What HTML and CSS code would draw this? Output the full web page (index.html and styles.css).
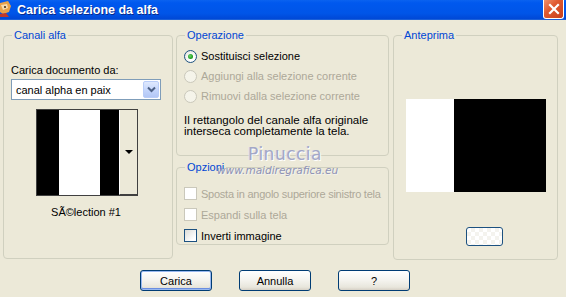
FILE: index.html
```html
<html>
  <head>
    <title>Carica selezione da alfa</title>
    <meta name="viewport" content="width=device-width, initial-scale=1">
    <link rel="stylesheet" href="styles.css">
  </head>
  <body>
    <div class="window">
      <div class="titlebar">
        <svg class="app-icon" width="14" height="18" viewBox="0 0 14 18">
          <path d="M0 3 L8 1 L11 6 L9 12 L3 14 L0 12 Z" fill="#e8a24a"/>
          <path d="M1 5 L7 4 L8 8 L3 10 Z" fill="#f6dcae"/>
          <circle cx="5" cy="7" r="1" fill="#3a2410"/>
          <path d="M0 14 L6 13 L9 17 L0 17 Z" fill="#c0392b"/>
        </svg>
        <span class="title">Carica selezione da alfa</span>
        <span class="close">
          <svg width="12" height="12" viewBox="0 0 12 12">
            <path d="M2 2 L10 10 M10 2 L2 10" stroke="#fff" stroke-width="2.2" stroke-linecap="square"/>
          </svg>
        </span>
      </div>

      <div class="panels">
        <fieldset class="group channels">
          <legend>Canali alfa</legend>
          <div class="field-label">Carica documento da:</div>
          <div class="select">
            <span class="select-value">canal alpha en paix</span>
            <span class="select-btn">
              <svg width="9" height="7" viewBox="0 0 9 7">
                <path d="M1 1.5 L4.5 5 L8 1.5" fill="none" stroke="#4d6185" stroke-width="2"/>
              </svg>
            </span>
          </div>
          <div class="thumb">
            <div class="thumb-img">
              <span class="band black" style="width: 22px"></span>
              <span class="band white" style="width: 41px"></span>
              <span class="band black" style="width: 19px"></span>
            </div>
            <div class="thumb-scroll">
              <span class="arrow"></span>
            </div>
          </div>
          <div class="caption">SÃ©lection #1</div>
        </fieldset>

        <div class="middle">
          <fieldset class="group operation">
            <legend>Operazione</legend>
            <div class="option">
              <span class="radio checked"></span>
              <span>Sostituisci selezione</span>
            </div>
            <div class="option disabled">
              <span class="radio"></span>
              <span>Aggiungi alla selezione corrente</span>
            </div>
            <div class="option disabled">
              <span class="radio"></span>
              <span>Rimuovi dalla selezione corrente</span>
            </div>
            <p class="note">Il rettangolo del canale alfa originale<br>interseca completamente la tela.</p>
          </fieldset>

          <fieldset class="group options">
            <legend>Opzioni</legend>
            <div class="option disabled tight">
              <span class="check"></span>
              <span>Sposta in angolo superiore sinistro tela</span>
            </div>
            <div class="option disabled">
              <span class="check"></span>
              <span>Espandi sulla tela</span>
            </div>
            <div class="option">
              <span class="check"></span>
              <span>Inverti immagine</span>
            </div>
          </fieldset>

          <div class="watermark">
            <div class="wm-name">Pinuccia</div>
            <div class="wm-url">www.maidiregrafica.eu</div>
          </div>
        </div>

        <fieldset class="group preview">
          <legend>Anteprima</legend>
          <div class="preview-img">
            <span class="band white" style="width: 48px"></span>
            <span class="band black" style="width: 92px"></span>
          </div>
          <span class="preview-btn"></span>
        </fieldset>
      </div>

      <div class="actions">
        <button class="btn default">Carica</button>
        <button class="btn">Annulla</button>
        <button class="btn">?</button>
      </div>
    </div>
  </body>
</html>
```

FILE: styles.css
```css
body {
  background: #ece9d8;
  color: #000000;
  font-family: "Liberation Sans", Arial, sans-serif;
  font-size: 11px;
  margin: 0;
}

.window {
  height: 297px;
  width: 566px;
}

.titlebar {
  align-items: center;
  background: linear-gradient(180deg, #0a62f0 0%, #0058ee 15%, #0055e8 70%, #0048d6 100%);
  border-bottom: 1px solid #1a5fd8;
  display: flex;
  height: 19px;
}

.app-icon {
  margin-left: 0;
  margin-top: -2px;
}

.title {
  color: #ffffff;
  font-family: "Liberation Sans", Arial, sans-serif;
  font-size: 12.5px;
  font-weight: bold;
  margin-left: 3px;
  text-shadow: 1px 1px 0 #0a2a8c;
}

.close {
  align-items: center;
  background: linear-gradient(135deg, #f0906c 0%, #e05a30 40%, #c8401c 100%);
  border: 1px solid #ffffff;
  border-radius: 0 0 3px 3px;
  border-top: 0;
  display: flex;
  height: 18px;
  justify-content: center;
  margin-left: auto;
  margin-right: 2px;
  margin-top: -1px;
  width: 19px;
}

.panels {
  display: grid;
  gap: 0 4px;
  grid-template-columns: 170px 212px 165px;
  padding: 8px 0 0 3px;
}

.panels .middle {
  margin-left: -1px;
}

.group {
  border: 1px solid #d0d0bf;
  border-radius: 4px;
  margin: 0;
  min-width: 0;
  padding: 0 7px;
}

.group legend {
  color: #0046d5;
  line-height: 14px;
  margin-left: 1px;
  padding: 0 2px;
}

.channels {
  height: 229px;
}

.field-label {
  line-height: 14px;
  margin-top: 21px;
}

.select {
  align-items: center;
  background: #ffffff;
  border: 1px solid #7f9db9;
  box-sizing: border-box;
  display: flex;
  height: 21px;
  margin-top: 2px;
  padding: 0 1px 0 4px;
  width: 150px;
}

.select-value {
  flex: 1;
}

.select-btn {
  align-items: center;
  background: linear-gradient(180deg, #dfe9fd 0%, #c1d3fb 60%, #b3c7f5 100%);
  border: 1px solid #b9cdf8;
  border-radius: 2px;
  box-sizing: border-box;
  display: flex;
  height: 17px;
  justify-content: center;
  width: 16px;
}

.thumb {
  border: 1px solid #404040;
  box-sizing: border-box;
  display: flex;
  height: 87px;
  margin: 9px 0 0 25px;
  width: 102px;
}

.thumb-img {
  display: flex;
}

.band {
  display: block;
  height: 100%;
}

.band.black {
  background: #000000;
}

.band.white {
  background: #ffffff;
}

.thumb-scroll {
  align-items: center;
  background: #ece9d8;
  border-bottom: 1px solid #404040;
  border-left: 1px solid #ffffff;
  box-sizing: border-box;
  display: flex;
  flex: 1;
  justify-content: center;
}

.arrow {
  border-left: 4px solid transparent;
  border-right: 4px solid transparent;
  border-top: 4px solid #000000;
  margin-top: -1px;
}

.caption {
  line-height: 14px;
  margin-top: 9px;
  padding-right: 4px;
  text-align: center;
}

.middle {
  display: flex;
  flex-direction: column;
  gap: 4px;
  position: relative;
}

.operation {
  height: 126px;
}

.options {
  height: 83px;
}

.operation .option:first-of-type {
  margin-top: 4px;
}

.option {
  align-items: center;
  display: flex;
  gap: 4px;
  height: 20px;
  white-space: nowrap;
}

.option.tight {
  letter-spacing: -0.25px;
}

.options .option {
  height: 21px;
}

.options .option:first-of-type {
  margin-top: 9px;
}

.option.disabled {
  color: #aca899;
}

.radio {
  background: radial-gradient(circle at 60% 65%, #ffffff 30%, #dcdcd7 100%);
  border: 1px solid #1c5180;
  border-radius: 50%;
  box-sizing: border-box;
  flex: none;
  height: 13px;
  position: relative;
  width: 13px;
}

.radio.checked::after {
  background: radial-gradient(circle at 40% 40%, #6fd36f 0%, #21a121 60%, #178a17 100%);
  border-radius: 50%;
  content: "";
  height: 5px;
  left: 3px;
  position: absolute;
  top: 3px;
  width: 5px;
}

.disabled .radio {
  background: #f5f4ea;
  border-color: #cac8bb;
}

.check {
  background: linear-gradient(135deg, #dcdcd7 0%, #ffffff 80%);
  border: 1px solid #1c5180;
  box-sizing: border-box;
  flex: none;
  height: 13px;
  width: 13px;
}

.disabled .check {
  background: #ffffff;
  border-color: #cac8bb;
}

.note {
  font-size: 11.5px;
  line-height: 11px;
  margin: 9px 0 0;
}

.watermark {
  left: 0;
  pointer-events: none;
  position: absolute;
  top: 116px;
  width: 212px;
}

.wm-name {
  color: #a3a7c6;
  font-family: "DejaVu Sans", sans-serif;
  font-size: 17px;
  letter-spacing: 0.5px;
  margin-left: 72px;
  text-shadow: 1px 1px 0 #ffffff, -1px 0 0 #d9dbe8;
}

.wm-url {
  color: #8c91b5;
  font-family: "DejaVu Sans", sans-serif;
  font-size: 10.5px;
  font-style: italic;
  margin: 0 0 0 41px;
  text-shadow: 1px 1px 0 #f4f3ee;
}

.preview {
  height: 230px;
}

.preview-img {
  display: flex;
  height: 93px;
  margin: 57px 0 0 5px;
  width: 140px;
}

.preview-btn {
  background:
    linear-gradient(45deg, #f4f3ee 25%, transparent 25%, transparent 75%, #f4f3ee 75%),
    linear-gradient(45deg, #f4f3ee 25%, #ffffff 25%, #ffffff 75%, #f4f3ee 75%);
  background-position: 0 0, 4px 4px;
  background-size: 8px 8px;
  border: 1px solid #1c5180;
  border-radius: 3px;
  box-sizing: border-box;
  display: block;
  height: 19px;
  margin: 35px 0 0 65px;
  width: 37px;
}

.actions {
  display: flex;
  gap: 27px;
  padding: 10px 0 0 140px;
}

.btn {
  background: linear-gradient(180deg, #ffffff 0%, #f4f3ee 50%, #e8e6dc 85%, #d6d0c5 100%);
  border: 1px solid #003c74;
  border-radius: 3px;
  color: #000000;
  font-family: "Liberation Sans", Arial, sans-serif;
  font-size: 11px;
  height: 21px;
  padding: 0;
  width: 72px;
}

.btn.default {
  box-shadow: inset 0 0 0 1px #98b8f0, inset 0 -1px 0 1px #6b8ee0;
}
```
